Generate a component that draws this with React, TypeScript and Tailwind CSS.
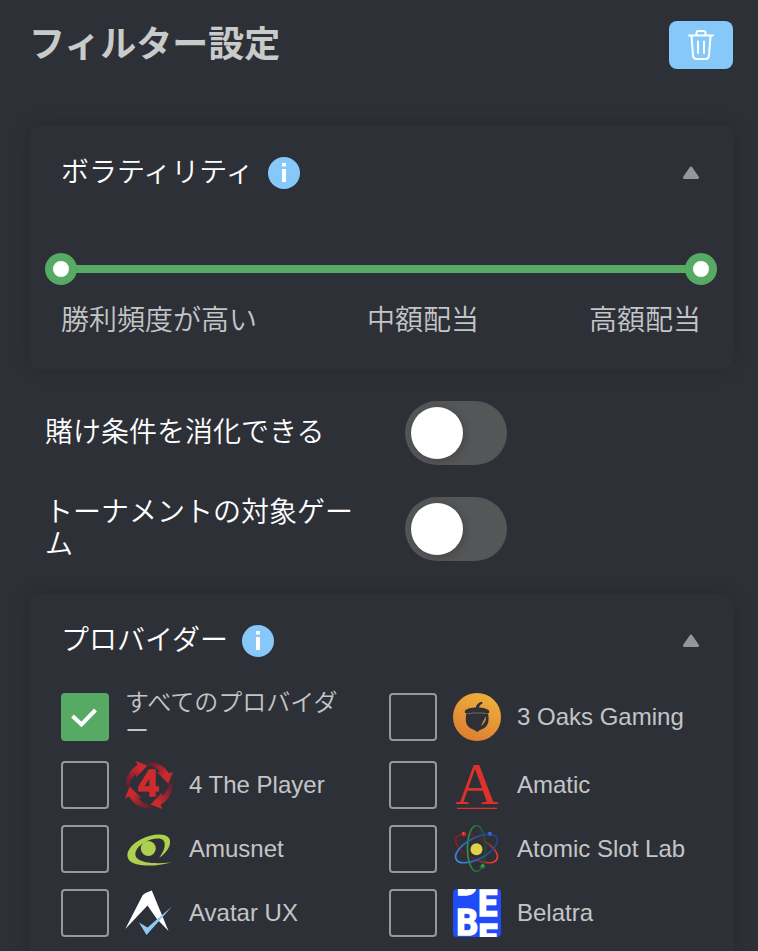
import { useState } from 'react'
import type { ReactNode } from 'react'

type Provider = {
  id: string
  name: string
  logo?: ReactNode
}

const OaksLogo = () => (
  <svg viewBox="0 0 48 48" className="size-12 shrink-0" aria-hidden="true">
    <defs>
      <linearGradient id="oaks" x1="0.7" y1="0" x2="0.3" y2="1">
        <stop offset="0" stopColor="#eeb13b" />
        <stop offset="1" stopColor="#dc7d31" />
      </linearGradient>
    </defs>
    <circle cx="24" cy="24" r="24" fill="url(#oaks)" />
    <path d="M22.5 15.5C23 12 25.5 9.5 28.6 8.8l1.2 1.5c-2.6 1.3-3.8 3-4 5.4z" fill="#2e3038" />
    <path d="M11.8 18.6c.4-2.500 6-4 12.200-4s11.900 1.500 12.300 4c.1 1.300-.7 2-1.800 1.900-2.500-1.100-18.500-1.100-21 0-1.100.1-1.800-.6-1.700-1.900z" fill="#2e3038" />
    <path d="M13.300 20.900c3-.8 18.800-.8 21.800 0 .9 4.600.8 9.300-2 12.600-2.400 2.600-6.400 3.200-8.900 5.500-2.500-2.300-6.500-2.900-8.900-5.500-2.800-3.300-2.900-8-2-12.600z" fill="#2e3038" />
    <path d="M32.900 23.500c.3 4-1.700 7.600-5.400 9.500 2.600-3 2.600-5.500 5.400-9.500z" fill="#e0922f" />
  </svg>
)

const arrowPath = 'M.4 28C0 17 4.500 8.500 12.500 4.200L10.700 0 22.500 4.600 11 16.500l-.2-3.500C7 16.500 5 20 4 25z'

const FourPlayerLogo = () => (
  <svg viewBox="0 0 48 48" className="size-12 shrink-0" aria-hidden="true">
    <defs>
      <linearGradient id="four" x1="0" y1="1" x2="0.7" y2="0">
        <stop offset="0" stopColor="#4a2431" />
        <stop offset="0.35" stopColor="#85202f" />
        <stop offset="0.8" stopColor="#cb2a2d" />
      </linearGradient>
    </defs>
    <path d={arrowPath} fill="url(#four)" />
    <path d={arrowPath} fill="url(#four)" transform="rotate(90 24 24)" />
    <path d={arrowPath} fill="url(#four)" transform="rotate(180 24 24)" />
    <path d={arrowPath} fill="url(#four)" transform="rotate(270 24 24)" />
    <text x="23" y="35" textAnchor="middle" fontSize="36" fontWeight="700" fontFamily="'Liberation Sans', sans-serif" fill="#cf2b2d" stroke="#cf2b2d" strokeWidth="1.500">4</text>
  </svg>
)

const AmaticLogo = () => (
  <svg viewBox="0 0 48 48" className="size-12 shrink-0 overflow-visible" aria-hidden="true">
    <text x="24" y="43" textAnchor="middle" fontSize="60" fontFamily="'Liberation Serif', serif" fill="#dd322c">A</text>
    <path d="M4 47.300h40" stroke="#dd322c" strokeWidth="1.300" />
  </svg>
)

const AmusnetLogo = () => (
  <svg viewBox="0 0 48 48" className="size-12 shrink-0" aria-hidden="true">
    <path d="M46.200 37.500C30 42 12 41.500 5.500 36.500-1.500 30.500 4 20.500 16 14.300 26 9 40 7.500 44 13c3.500 5.500-2 15-10 19.800 4.800-5.800 7.500-13.300 4.500-17.300-3.500-3.500-12.500-2-19 2-8.500 5-12 12-6.500 16.500 5 4 17 5 33.200 3.500z" fill="#aed04f" />
    <circle cx="23.300" cy="23.500" r="7.500" fill="#aed04f" />
  </svg>
)

const AtomicLogo = () => (
  <svg viewBox="0 0 48 48" className="size-12 shrink-0" aria-hidden="true">
    <defs>
      <linearGradient id="atomRed" x1="0" x2="1">
        <stop offset="0" stopColor="#8f1d20" />
        <stop offset="0.45" stopColor="#4e2228" />
        <stop offset="1" stopColor="#ee3a34" />
      </linearGradient>
      <linearGradient id="atomBlue" x1="0" x2="1">
        <stop offset="0" stopColor="#3b8ae0" />
        <stop offset="0.6" stopColor="#2a4f96" />
        <stop offset="1" stopColor="#26418c" />
      </linearGradient>
      <linearGradient id="atomGreen" x1="0" x2="1">
        <stop offset="0" stopColor="#2e9140" />
        <stop offset="1" stopColor="#1f4f30" />
      </linearGradient>
    </defs>
    <g fill="none" strokeWidth="1.700">
      <ellipse cx="23.500" cy="23.500" rx="23" ry="10.500" stroke="url(#atomRed)" transform="rotate(28 23.500 23.500)" />
      <ellipse cx="23.500" cy="23.500" rx="9" ry="23" stroke="url(#atomGreen)" />
      <ellipse cx="23.500" cy="23.500" rx="23" ry="10.500" stroke="url(#atomBlue)" transform="rotate(-28 23.500 23.500)" />
    </g>
    <circle cx="23.500" cy="24.300" r="6" fill="#e3cf48" />
    <circle cx="10.700" cy="9" r="2.300" fill="#d4282b" />
    <circle cx="37" cy="9" r="2.300" fill="#2f58b8" />
    <circle cx="29.700" cy="41.300" r="2.300" fill="#278a3c" />
    <g fill="#ffffff" opacity="0.6">
      <circle cx="10.500" cy="8" r="0.600" />
      <circle cx="36.800" cy="8" r="0.600" />
      <circle cx="29.500" cy="40.300" r="0.600" />
    </g>
  </svg>
)

const AvatarLogo = () => (
  <svg viewBox="0 0 48 48" className="size-12 shrink-0" aria-hidden="true">
    <path d="M.3 40 17.500 6.500Q18.500 5 20.500 4l6.300-2.500L43.500 42 31.500 29.500 22.500 16.500z" fill="#ffffff" />
    <path d="M14 33.500l8.500 5L47 17.500 21.500 46z" fill="#8fcaf5" />
  </svg>
)

const BelatraLogo = () => (
  <svg viewBox="0 0 48 48" className="size-12 shrink-0 rounded-[4px]" aria-hidden="true">
    <rect width="48" height="48" fill="#204bf8" />
    <g fill="#ffffff" stroke="#ffffff" strokeWidth="1.500" textAnchor="middle" fontFamily="'DejaVu Sans Mono', monospace" fontWeight="700" fontSize="36">
      <text x="14" y="6">D</text>
      <text x="14" y="46">B</text>
      <text x="35" y="27">E</text>
      <text x="35" y="61">F</text>
    </g>
  </svg>
)

const providers: Provider[] = [
  { id: 'all', name: 'すべてのプロバイダー' },
  { id: '3oaks', name: '3 Oaks Gaming', logo: <OaksLogo /> },
  { id: '4theplayer', name: '4 The Player', logo: <FourPlayerLogo /> },
  { id: 'amatic', name: 'Amatic', logo: <AmaticLogo /> },
  { id: 'amusnet', name: 'Amusnet', logo: <AmusnetLogo /> },
  { id: 'atomic', name: 'Atomic Slot Lab', logo: <AtomicLogo /> },
  { id: 'avatarux', name: 'Avatar UX', logo: <AvatarLogo /> },
  { id: 'belatra', name: 'Belatra', logo: <BelatraLogo /> },
]

/** Collapsible card with a title, an info button and an arrow. */
function Panel({ title, children }: { title: string; children: ReactNode }) {
  const [open, setOpen] = useState(true)

  return (
    <section className="rounded-xl bg-[#2e3038] p-8 shadow-[0_0_20px_rgba(0,0,0,0.16)]">
      <div className="flex h-8 items-center gap-3.5">
        <h2 className="text-[28px] leading-8 font-[350] text-white">{title}</h2>
        <button type="button" aria-label={`${title}の説明`} className="size-8 rounded-full">
          <svg viewBox="0 0 32 32" className="size-8" aria-hidden="true">
            <circle cx="16" cy="16" r="16" fill="#87c8fb" />
            <path d="M14 6h4v3.500h-4zM14 12h4v13h-4z" fill="#ffffff" />
          </svg>
        </button>
        <button type="button" aria-label="開閉" aria-expanded={open} onClick={() => setOpen(!open)} className="ml-auto">
          <svg viewBox="0 0 18 14" className={open ? 'h-3.5 w-[18px]' : 'h-3.5 w-[18px] rotate-180'} aria-hidden="true">
            <path d="M8 2 14.500 11.500H1.500z" fill="#969799" stroke="#969799" strokeWidth="3" strokeLinejoin="round" />
          </svg>
        </button>
      </div>
      {open && children}
    </section>
  )
}

// Two native ranges share one grid cell, only their thumbs take the pointer.
const rangeClass =
  'pointer-events-none col-start-1 row-start-1 m-0 h-8 w-full appearance-none bg-transparent [&::-webkit-slider-thumb]:pointer-events-auto [&::-webkit-slider-thumb]:size-8 [&::-webkit-slider-thumb]:appearance-none [&::-webkit-slider-thumb]:rounded-full [&::-webkit-slider-thumb]:border-8 [&::-webkit-slider-thumb]:border-[#56aa63] [&::-webkit-slider-thumb]:bg-white'

function VolatilitySlider() {
  const [low, setLow] = useState(0)
  const [high, setHigh] = useState(100)

  return (
    <>
      <div className="-mx-4 mt-16 grid items-center">
        <div className="col-start-1 row-start-1 mx-4 h-2 bg-[#555657]">
          <div className="h-2 bg-[#56aa63]" style={{ marginLeft: `${low}%`, width: `${high - low}%` }} />
        </div>
        <input
          type="range"
          aria-label="ボラティリティ下限"
          value={low}
          onChange={(e) => setLow(Math.min(Number(e.target.value), high))}
          className={rangeClass}
        />
        <input
          type="range"
          aria-label="ボラティリティ上限"
          value={high}
          onChange={(e) => setHigh(Math.max(Number(e.target.value), low))}
          className={rangeClass}
        />
      </div>
      <div className="mt-5 flex justify-between text-[28px] leading-8 font-[350] text-[#c4c5c7]">
        <span>勝利頻度が高い</span>
        <span>中額配当</span>
        <span>高額配当</span>
      </div>
    </>
  )
}

function ToggleRow({ id, label }: { id: string; label: string }) {
  return (
    <div className="flex items-center gap-6">
      <label htmlFor={id} className="w-1/2 pr-4 text-[28px] leading-8 font-[350] text-white">
        {label}
      </label>
      <input
        id={id}
        type="checkbox"
        role="switch"
        className="h-16 w-[102px] shrink-0 cursor-pointer appearance-none rounded-full bg-[#555657] p-1.5 before:block before:size-13 before:rounded-full before:bg-white before:shadow-[2px_2px_8px_rgba(0,0,0,0.2)] checked:bg-[#56aa63] checked:before:ml-[38px]"
      />
    </div>
  )
}

function ProviderOption({ provider, checked, onChange }: { provider: Provider; checked: boolean; onChange: () => void }) {
  return (
    <label className="flex cursor-pointer items-center gap-4">
      <span className="grid shrink-0 place-items-center">
        <input
          type="checkbox"
          checked={checked}
          onChange={onChange}
          className="col-start-1 row-start-1 size-12 appearance-none rounded-[4px] border-2 border-[#97989b] checked:border-[#56aa63] checked:bg-[#56aa63]"
        />
        {checked && (
          <svg viewBox="0 0 48 48" className="pointer-events-none col-start-1 row-start-1 size-12" aria-hidden="true">
            <path d="M11.500 23l9 8.500L34.500 17" fill="none" stroke="#ffffff" strokeWidth="4" />
          </svg>
        )}
      </span>
      {provider.logo}
      <span className={provider.logo ? 'text-2xl leading-7' : 'pr-4 text-2xl leading-7 font-[350]'}>{provider.name}</span>
    </label>
  )
}

export default function App() {
  const [selected, setSelected] = useState<string[]>(['all'])

  const toggle = (id: string) => {
    if (id === 'all') {
      setSelected(['all'])
      return
    }
    const rest = selected.filter((item) => item !== 'all')
    setSelected(rest.includes(id) ? rest.filter((item) => item !== id) : [...rest, id])
  }

  return (
    <main lang="ja" className="min-h-screen bg-[#2e3038] pt-[21px] pr-[25px] pl-[29px] font-['Liberation_Sans','Noto_Sans_CJK_JP',sans-serif] text-[#c4c5c7]">
      <header className="flex h-12 items-center justify-between">
        <h1 className="text-4xl leading-12 font-bold text-[#c9caca]">フィルター設定</h1>
        <button type="button" aria-label="フィルターをリセット" className="grid h-12 w-16 place-items-center rounded-lg bg-[#87c8fb]">
          <svg viewBox="0 0 28 32" className="h-8 w-7" fill="none" stroke="#ffffff" strokeWidth="2" strokeLinecap="round" strokeLinejoin="round" aria-hidden="true">
            <path d="M2 6.500h24M9.500 6V4a2 2 0 0 1 2-2h5a2 2 0 0 1 2 2v2M4.500 7l1.500 19.500a3.500 3.500 0 0 0 3.500 3.500h9a3.500 3.500 0 0 0 3.500-3.500L23.500 7M11 12.500v11.500M17 12.500v11.500" />
          </svg>
        </button>
      </header>

      <div className="mt-14">
        <Panel title="ボラティリティ">
          <VolatilitySlider />
        </Panel>
      </div>

      <div className="flex flex-col gap-8 px-4 py-8">
        <ToggleRow id="wagering" label="賭け条件を消化できる" />
        <ToggleRow id="tournament" label="トーナメントの対象ゲーム" />
      </div>

      <Panel title="プロバイダー">
        <div className="mt-8 grid grid-cols-2 gap-4">
          {providers.map((provider) => (
            <ProviderOption
              key={provider.id}
              provider={provider}
              checked={selected.includes(provider.id)}
              onChange={() => toggle(provider.id)}
            />
          ))}
        </div>
      </Panel>
    </main>
  )
}
